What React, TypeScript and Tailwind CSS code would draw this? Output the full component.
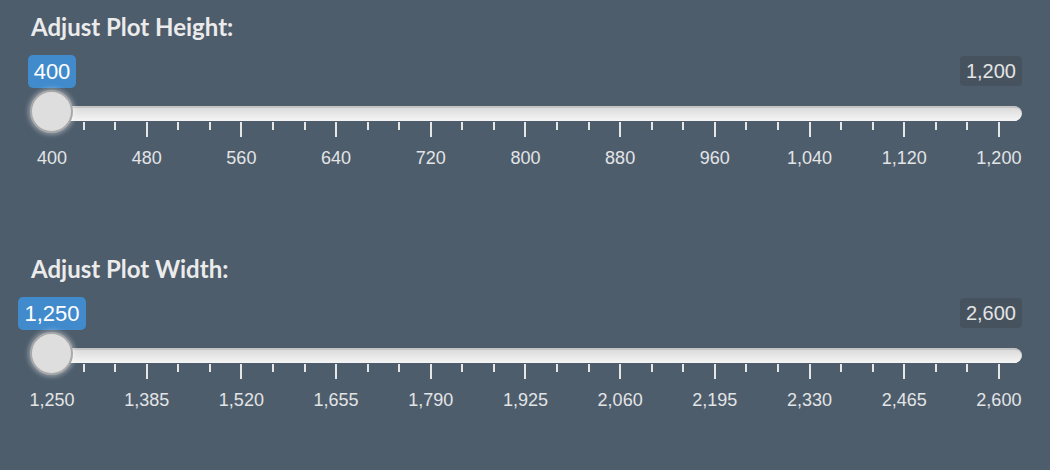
const sliders = [
  { title: "Adjust Plot Height:", min: 400, max: 1200, value: 400 },
  { title: "Adjust Plot Width:", min: 1250, max: 2600, value: 1250 },
];

const fmt = (n: number) => n.toLocaleString("en-US");

const RangeSlider: React.FC<{ title: string; min: number; max: number; value: number }> = ({
  title,
  min,
  max,
  value,
}) => {
  const steps = 10;
  const ticks = Array.from({ length: steps * 3 + 1 }, (_, i) => i % 3 === 0);
  const labels = Array.from({ length: steps + 1 }, (_, i) => fmt(min + ((max - min) / steps) * i));
  const offset = ((value - min) / (max - min)) * 947;

  return (
    <div className="flex h-[242px] flex-col pt-[13px] font-['Liberation_Sans','Arial',sans-serif]">
      <h3 className="pl-[31px] font-['Lato','Open_Sans',sans-serif] text-[24px] leading-[28px] font-bold text-[#ebebeb]">
        {title}
      </h3>

      {/* value bubbles */}
      <div className="mt-[14px] flex items-start justify-between pr-[28px]">
        <div className="flex w-[104px] justify-center" style={{ marginLeft: offset }}>
          <span className="h-[33px] rounded-[5px] bg-[#418bcd] px-[6px] text-[22px] leading-[33px] text-white">
            {fmt(value)}
          </span>
        </div>
        <span className="mt-[1px] h-[30px] rounded-[4px] bg-[#46535f] px-[6px] text-[20px] leading-[30px] text-[#e4e4e4]">
          {fmt(max)}
        </span>
      </div>

      {/* track + handle */}
      <div className="relative mt-[18px] pl-[40px] pr-[28px]">
        <div className="h-[15px] rounded-full border-t-2 border-[#c4c4c4] bg-gradient-to-b from-[#dcdcdc] to-[#f5f5f5]" />
        <div
          className="absolute left-[30px] top-[-16px] h-[43px] w-[43px] rounded-full border-2 border-[#a9a9a9] bg-[#dedede] shadow-[0_0_4px_2px_rgba(255,255,255,0.35)]"
          style={{ marginLeft: offset }}
        />
      </div>

      {/* grid ticks */}
      <div className="mt-[1px] ml-[51px] flex w-[949px] items-start justify-between">
        {ticks.map((big, i) => (
          <span key={i} className={`w-[2px] bg-[#e6e6e6] ${big ? "h-[15px]" : "h-[8px]"} ${i === 0 ? "opacity-0" : ""}`} />
        ))}
      </div>

      {/* grid labels */}
      <div className="mt-[11px] ml-[52px] flex w-[947px] justify-between">
        {labels.map((text, i) => (
          <span key={i} className="flex w-0 justify-center whitespace-nowrap text-[18px] leading-[20px] text-[#e2e4e6]">
            {text}
          </span>
        ))}
      </div>
    </div>
  );
};

export default function App() {
  return (
    <div className="h-[470px] w-full overflow-hidden bg-[#4e5d6c]">
      {sliders.map((s) => (
        <RangeSlider key={s.title} {...s} />
      ))}
    </div>
  );
}
